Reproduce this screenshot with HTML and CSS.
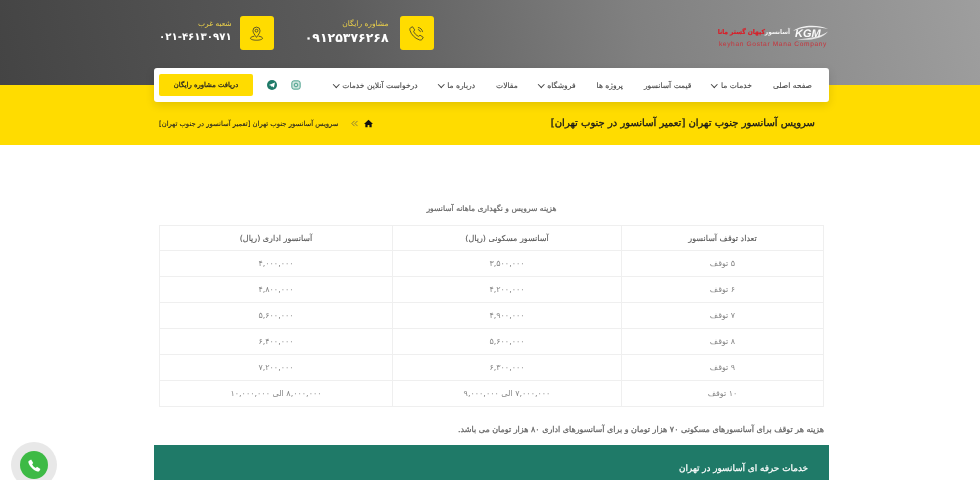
FILE: index.html
```html
<!DOCTYPE html>
<html lang="fa" dir="rtl">
<head>
<meta charset="utf-8">
<title>سرویس آسانسور جنوب تهران</title>
<link rel="stylesheet" href="styles.css">
</head>
<body>
<header class="masthead">
  <div class="topbar">
    <div class="logo">
      <div class="logo-row">
        <svg class="logo-mark" viewBox="0 0 38 15" width="38" height="15"><path d="M3 6C11 0 27-1 38 4 29 2 17 1.500 9 4z" fill="#f0f0f0"/><path d="M7 14.500c12 1 25 0 31-8-7 5-19 7-31 8z" fill="#e4e4e4"/><text x="5" y="12" class="logo-kgm">KGM</text></svg>
        <span class="logo-white">آسانسور</span><span class="logo-red">کیهان گستر مانا</span>
      </div>
      <div class="logo-en" dir="ltr">keyhan Gostar Mana Company</div>
    </div>
    <div class="contacts">
      <div class="contact">
        <div class="contact-icon">
          <svg viewBox="0 0 24 24" width="17" height="17" fill="none" stroke="#333" stroke-width="1.1"><path d="M6.5 2.500 9.500 7 8 9c.8 2.800 4 6 7 7l2-1.600 4.500 3-1.500 2.800c-.8 1-2.500 1.300-4 .8C9.500 18.800 4.500 13.500 2.800 7.500c-.4-1.500 0-3 1-3.800z"/><path d="M14 3.500c3.500.3 6.200 3 6.500 6.500M14 6.500c1.800.2 3.300 1.700 3.500 3.500"/></svg>
        </div>
        <div class="contact-text">
          <span class="contact-label">مشاوره رایگان</span>
          <span class="contact-number">۰۹۱۲۵۳۷۶۲۶۸</span>
        </div>
      </div>
      <div class="contact contact-west">
        <div class="contact-icon">
          <svg viewBox="0 0 24 24" width="17" height="17" fill="none" stroke="#333" stroke-width="1.1"><path d="M12 17.500C9.500 13.800 7 11 7 8a5 5 0 0 1 10 0c0 3-2.500 5.800-5 9.500z"/><circle cx="12" cy="8" r="2"/><path d="M9 15.800C6 16.200 3.500 17.300 3.500 18.800 3.500 20.300 7.500 21.500 12 21.500s8.500-1.200 8.500-2.700c0-1.500-2.500-2.600-5.500-3"/></svg>
        </div>
        <div class="contact-text">
          <span class="contact-label">شعبه غرب</span>
          <span class="contact-number contact-number-small">۰۲۱-۴۶۱۳۰۹۷۱</span>
        </div>
      </div>
    </div>
  </div>
  <nav class="nav">
    <ul class="menu">
      <li class="item">صفحه اصلی</li>
      <li class="item has-sub">خدمات ما</li>
      <li class="item">قیمت آسانسور</li>
      <li class="item">پروژه ها</li>
      <li class="item has-sub">فروشگاه</li>
      <li class="item">مقالات</li>
      <li class="item has-sub">درباره ما</li>
      <li class="item has-sub">درخواست آنلاین خدمات</li>
    </ul>
    <div class="nav-end">
      <svg class="social" viewBox="0 0 12 12" width="10" height="10" fill="none" stroke="#3f9a86" stroke-width="1.100"><rect x="1" y="1" width="10" height="10" rx="2.500" fill="#cfe6df"/><circle cx="6" cy="6" r="2.200"/></svg>
      <svg class="social" viewBox="0 0 12 12" width="10" height="10"><circle cx="6" cy="6" r="6" fill="#1f7a68"/><path d="M2.300 6 9.500 3 8.300 9 6 7.500 5 8.500V7z" fill="#fff"/></svg>
      <a class="cta" href="#">دریافت مشاوره رایگان</a>
    </div>
  </nav>
  <div class="titlebar">
    <h1 class="page-title">سرویس آسانسور جنوب تهران [تعمیر آسانسور در جنوب تهران]</h1>
    <div class="crumbs">
      <svg viewBox="0 0 12 12" width="9" height="9"><path d="M6 1 0 6.500h1.800V11h3V8h2.400v3h3V6.500H12z" fill="#111"/></svg>
      <svg class="crumb-sep" viewBox="0 0 8 8" width="7" height="7" fill="none" stroke="#555" stroke-width=".8"><path d="M4 1 1 4l3 3M7.500 1l-3 3 3 3"/></svg>
      <span>سرویس آسانسور جنوب تهران [تعمیر آسانسور در جنوب تهران]</span>
    </div>
  </div>
</header>
<main class="content">
  <h2 class="table-title">هزینه سرویس و نگهداری ماهانه آسانسور</h2>
  <table class="prices">
    <thead>
      <tr><th>تعداد توقف آسانسور</th><th>آسانسور مسکونی (ریال)</th><th>آسانسور اداری (ریال)</th></tr>
    </thead>
    <tbody>
      <tr><td>۵ توقف</td><td>۳,۵۰۰,۰۰۰</td><td>۴,۰۰۰,۰۰۰</td></tr>
      <tr><td>۶ توقف</td><td>۴,۲۰۰,۰۰۰</td><td>۴,۸۰۰,۰۰۰</td></tr>
      <tr><td>۷ توقف</td><td>۴,۹۰۰,۰۰۰</td><td>۵,۶۰۰,۰۰۰</td></tr>
      <tr><td>۸ توقف</td><td>۵,۶۰۰,۰۰۰</td><td>۶,۴۰۰,۰۰۰</td></tr>
      <tr><td>۹ توقف</td><td>۶,۳۰۰,۰۰۰</td><td>۷,۲۰۰,۰۰۰</td></tr>
      <tr><td>۱۰ توقف</td><td>۷,۰۰۰,۰۰۰ الی ۹,۰۰۰,۰۰۰</td><td>۸,۰۰۰,۰۰۰ الی ۱۰,۰۰۰,۰۰۰</td></tr>
    </tbody>
  </table>
  <p class="note">هزینه هر توقف برای آسانسورهای مسکونی ۷۰ هزار تومان و برای آسانسورهای اداری ۸۰ هزار تومان می باشد.</p>
  <section class="services">
    <h3 class="services-title">خدمات حرفه ای آسانسور در تهران</h3>
  </section>
</main>
<a class="call" href="#" aria-label="تماس">
  <span class="call-inner">
    <svg viewBox="0 0 24 24" width="15" height="15"><path d="M6.600 2.500 10 8 8.200 10c.9 2.300 3.300 4.900 5.800 5.800l2-1.800 5.500 3.400-1.700 3.300c-.6.900-1.800 1.300-3 1C10.500 20 4 13.500 2.300 7.200c-.3-1.200.1-2.400 1-3z" fill="#fff"/></svg>
  </span>
</a>
</body>
</html>
```

FILE: styles.css
```css
* { box-sizing: border-box; }
html, body { margin: 0; padding: 0; height: 480px; overflow: hidden; }
body { font-family: "DejaVu Sans", "Noto Sans", sans-serif; background: #fff; color: #555; position: relative; text-rendering: geometricPrecision; }
ul { list-style: none; margin: 0; padding: 0; }
a { text-decoration: none; color: inherit; }

.masthead {
  height: 145px;
  will-change: transform;
  background:
    linear-gradient(#ffdc00, #ffdc00) bottom / 100% 60px no-repeat,
    linear-gradient(78deg, #444 0%, #5b5b5b 35%, #808080 65%, #9e9e9e 100%) top / 100% 85px no-repeat;
}
.topbar {
  width: 675px; height: 68px; margin: 0 151px 0 154px;
  display: flex; justify-content: space-between; align-items: center;
  padding: 0 1px 2px 5px;
}
.logo { width: 110px; margin-top: 7px; }
.logo-row { display: flex; align-items: center; height: 15px; white-space: nowrap; }
.logo-mark { flex: none; }
.logo-kgm { font: italic 900 11px "Liberation Sans", sans-serif; fill: #fafafa; direction: ltr; }
.logo-white { font-family: "DejaVu Sans Condensed", "DejaVu Sans", sans-serif; font-size: 6.500px; font-weight: 700; color: #f2f2f2; }
.logo-red { font-family: "DejaVu Sans Condensed", "DejaVu Sans", sans-serif; font-size: 6.600px; font-weight: 700; -webkit-text-stroke: .2px #d9202a; color: #d9202a; }
.logo-en { margin-top: 1px; font: 6.600px/8px "Liberation Sans", sans-serif; letter-spacing: .65px; color: #c8323a; text-align: center; white-space: nowrap; }

.contacts { display: flex; gap: 31px; }
.contact { display: flex; align-items: center; gap: 11px; }
.contact-west { gap: 8px; }
.contact-icon {
  width: 34px; height: 34px; border-radius: 3px; background: #ffdc00;
  display: flex; align-items: center; justify-content: center;
}
.contact-text { display: flex; flex-direction: column; margin-top: -3px; }
.contact-label { font-size: 7.500px; line-height: 11px; margin-bottom: 1px; color: #ecd14a; }
.contact-number { font-size: 12.500px; line-height: 15px; font-weight: 700; color: #fff; letter-spacing: .6px; }
.contact-number-small { font-size: 10.200px; letter-spacing: .5px; direction: ltr; unicode-bidi: plaintext; }

.nav {
  width: 675px; height: 34px; margin: 0 151px 0 154px;
  display: flex; justify-content: space-between; align-items: center;
  background: #fff; border-radius: 3px;
  box-shadow: 0 3px 10px rgba(0,0,0,.12);
  padding: 0 17px 0 5px;
}
.menu { display: flex; gap: 21px; align-items: center; }
.item { font-size: 7.600px; color: #444; -webkit-text-stroke: .1px #444; white-space: nowrap; display: flex; align-items: center; gap: 4px; }
.has-sub::after {
  content: ""; width: 3.500px; height: 3.500px; margin-top: -2px;
  border-right: 1px solid #444; border-bottom: 1px solid #444; transform: rotate(45deg);
}
.nav-end { display: flex; align-items: center; }
.social { margin-left: 14px; }
.cta {
  width: 94px; height: 22px; border-radius: 2px; background: #ffdc00;
  color: #222; font-size: 6.800px; -webkit-text-stroke: .25px #222;
  display: flex; align-items: center; justify-content: center;
}
.titlebar {
  width: 675px; height: 43px; margin: 0 151px 0 154px; padding: 0 14px 0 5px;
  display: flex; justify-content: space-between; align-items: center;
}
.page-title { margin: 0; font-size: 10px; line-height: 14px; font-weight: 400; -webkit-text-stroke: .35px #1a1a1a; color: #1a1a1a; white-space: nowrap; }
.crumbs { display: flex; align-items: center; font-size: 6.800px; color: #222; -webkit-text-stroke: .1px #222; white-space: nowrap; }
.crumb-sep { margin: 0 6px 0 12px; }

.content { width: 675px; margin: 0 151px 0 154px; padding-top: 58px; will-change: transform; }
.table-title { margin: 0 0 10px; height: 12px; text-align: center; font-size: 7.600px; line-height: 12px; font-weight: 400; -webkit-text-stroke: .2px #666; color: #666; }
.prices { width: 665px; margin: 0 5px; border-collapse: collapse; table-layout: fixed; }
.prices th, .prices td { border: 1px solid #efefef; text-align: center; height: 26px; padding: 0; }
.prices th { height: 25px; font-size: 8px; font-weight: 400; color: #555; -webkit-text-stroke: .1px #555; }
.prices td { font-size: 8px; color: #888; padding-bottom: 1px; }
.prices th:nth-child(1) { width: 202px; }
.prices th:nth-child(2) { width: 229px; }
.note { margin: 17px 5px 9px; font-size: 8px; line-height: 12px; font-weight: 400; -webkit-text-stroke: .25px #666; color: #666; white-space: nowrap; }
.services { height: 35px; background: #1f7a68; padding: 18px 21px 0; }
.services-title { margin: 0; font-size: 8.850px; line-height: 13px; font-weight: 400; -webkit-text-stroke: .25px #fff; color: #fff; }

.call {
  position: absolute; left: 11px; top: 442px; width: 46px; height: 46px; border-radius: 50%;
  background: #e8e8e8; display: flex; align-items: center; justify-content: center;
}
.call-inner {
  width: 28px; height: 28px; border-radius: 50%; background: #3dba45;
  display: flex; align-items: center; justify-content: center;
}
```
